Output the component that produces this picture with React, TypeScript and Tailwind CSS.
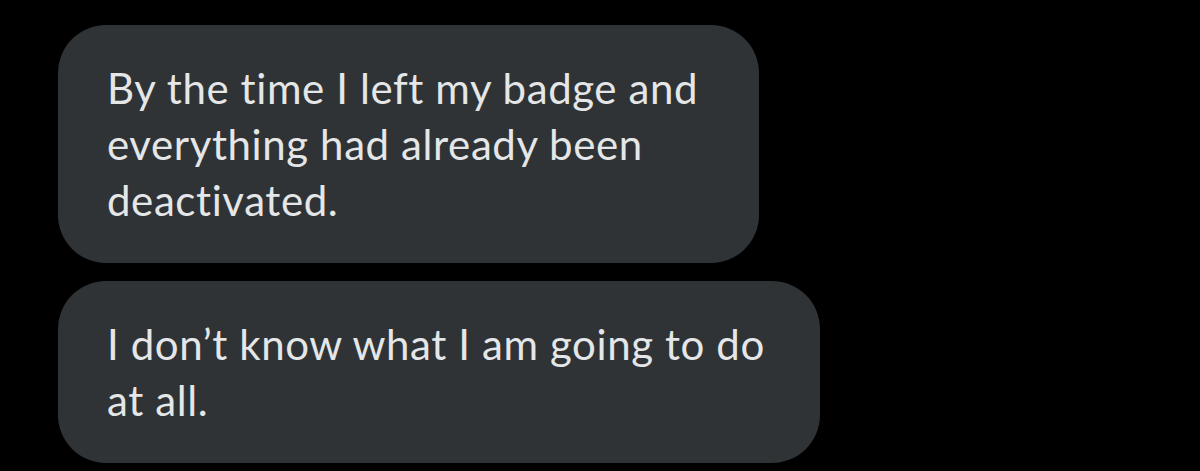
export default function App() {
  return (
    <div className="h-[471px] w-[1200px] bg-black pt-[25px] pl-[58px] font-['Lato','Noto_Sans',sans-serif] text-[42px] leading-[56px] tracking-[0.6px] text-[#e4e6e7] [font-variant-ligatures:none]">
      <div className="flex flex-col items-start gap-[18px]">
        <div className="w-[701px] rounded-[48px] bg-[#2f3336] py-[35px] pl-[49px]">
          By the time I left my badge and
          <br />
          everything had already been
          <br />
          deactivated.
        </div>
        <div className="w-[762px] rounded-[48px] bg-[#2f3336] py-[35px] pl-[49px]">
          I don’t know what I am going to do
          <br />
          at all.
        </div>
      </div>
    </div>
  );
}
